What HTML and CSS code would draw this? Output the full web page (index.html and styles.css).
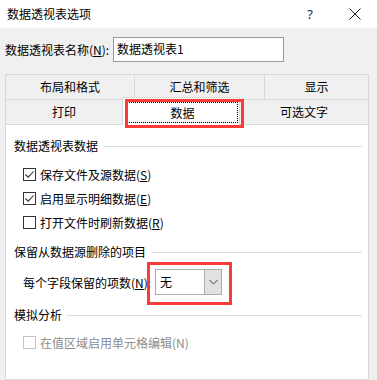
FILE: index.html
```html
<!DOCTYPE html>
<html lang="zh-CN">
<head>
<meta charset="utf-8">
<title>数据透视表选项</title>
<link rel="stylesheet" href="styles.css">
</head>
<body>
<div class="dialog">
  <div class="titlebar">
    <span class="title">数据透视表选项</span>
    <span class="tbtn help">?</span>
    <span class="tbtn close">
      <svg width="12" height="12" viewBox="0 0 12 12"><path d="M0.5 0.5 L11.5 11.5 M11.5 0.5 L0.5 11.5" stroke="#222" stroke-width="1" fill="none"/></svg>
    </span>
  </div>
  <div class="body">
    <div class="namerow">
      <span class="namelabel">数据透视表名称(<u>N</u>):</span>
      <div class="textbox">数据透视表1</div>
    </div>
    <div class="tabs">
      <div class="tabrow row1">
        <div class="tab">布局和格式</div>
        <div class="tab">汇总和筛选</div>
        <div class="tab last">显示</div>
      </div>
      <div class="tabrow row2">
        <div class="tab">打印</div>
        <div class="tab selected"><span class="focus">数据</span><span class="mark tabmark"></span></div>
        <div class="tab last">可选文字</div>
      </div>
    </div>
    <div class="panel">
      <div class="group">
        <div class="ghead">数据透视表数据</div>
        <div class="checks">
          <div class="check"><span class="box"><svg width="11" height="11" viewBox="0 0 11 11"><path d="M1.5 5.5 L4.2 8.2 L9.5 2.5" stroke="#333" stroke-width="1.1" fill="none"/></svg></span><span>保存文件及源数据(<u>S</u>)</span></div>
          <div class="check"><span class="box"><svg width="11" height="11" viewBox="0 0 11 11"><path d="M1.5 5.5 L4.2 8.2 L9.5 2.5" stroke="#333" stroke-width="1.1" fill="none"/></svg></span><span>启用显示明细数据(<u>E</u>)</span></div>
          <div class="check"><span class="box"></span><span>打开文件时刷新数据(<u>R</u>)</span></div>
        </div>
      </div>
      <div class="group g2">
        <div class="ghead">保留从数据源删除的项目</div>
        <div class="selrow">
          <span class="sellabel">每个字段保留的项数(<u>N</u>):</span>
          <div class="select">
            <span class="selval">无</span>
            <span class="selbtn"><svg width="9" height="6" viewBox="0 0 9 6"><path d="M0.5 1 L4.5 5 L8.5 1" stroke="#444" stroke-width="1" fill="none"/></svg></span>
            <span class="mark selmark"></span>
          </div>
        </div>
      </div>
      <div class="group g3">
        <div class="ghead">模拟分析</div>
        <div class="check disabled"><span class="box"></span><span>在值区域启用单元格编辑(N)</span></div>
      </div>
    </div>
  </div>
</div>
</body>
</html>
```

FILE: styles.css
```css
html, body {
  margin: 0;
  padding: 0;
}
body {
  width: 377px;
  height: 380px;
  overflow: hidden;
  font-family: "Noto Sans CJK SC", "Microsoft YaHei", sans-serif;
  font-size: 12px;
  color: #000;
  background: #f0f0f0;
}
.dialog {
  display: flex;
  flex-direction: column;
  height: 380px;
}
.titlebar {
  height: 28px;
  background: #fff;
  display: flex;
  align-items: center;
  padding-left: 7px;
  flex: none;
}
.title {
  flex: 1;
  line-height: 16px;
}
.tbtn {
  display: flex;
  align-items: center;
  justify-content: center;
  height: 28px;
}
.help {
  width: 46px;
  font-family: "Noto Sans", sans-serif;
  font-size: 13px;
  color: #222;
}
.close {
  width: 44px;
}
.body {
  flex: 1;
  display: flex;
  flex-direction: column;
  padding: 9px 0 0 5px;
}
.namerow {
  display: flex;
  align-items: center;
  height: 25px;
}
.namelabel {
  width: 108px;
  white-space: nowrap;
}
.textbox {
  box-sizing: border-box;
  width: 171px;
  height: 25px;
  background: #fff;
  border: 1px solid #9a9a9a;
  padding: 0 3px;
  line-height: 22px;
}
.tabs {
  margin-top: 12px;
  width: 364px;
}
.tabrow {
  display: grid;
  height: 25px;
}
.row1 {
  grid-template-columns: 129px 130px 105px;
}
.row2 {
  grid-template-columns: 117px 118px 129px;
}
.tab {
  box-sizing: border-box;
  border-top: 1px solid #d9d9d9;
  border-left: 1px solid #d9d9d9;
  display: flex;
  align-items: center;
  justify-content: center;
  line-height: 16px;
  position: relative;
}
.tab.last {
  border-right: 1px solid #d9d9d9;
}
.tab.selected {
  background: #fff;
  margin-top: -2px;
  height: 27px;
  border-left: 1px solid #d9d9d9;
  border-right: 1px solid #d9d9d9;
  z-index: 2;
  margin-bottom: -1px;
  height: 28px;
  padding: 4px 1px 2px 4px;
  align-items: stretch;
}
.row2 .tab.last {
  border-left: none;
}
.focus {
  flex: 1;
  border: 1px dotted #000;
  display: flex;
  align-items: center;
  justify-content: center;
}
.mark {
  position: absolute;
  border: 3px solid #fb3a3a;
  box-sizing: border-box;
  pointer-events: none;
}
.tabmark {
  left: 2px;
  top: 1px;
  width: 119px;
  height: 29px;
}
.panel {
  flex: 1;
  box-sizing: border-box;
  width: 364px;
  background: #fff;
  border: 1px solid #d9d9d9;
  padding: 13px 6px 0 8px;
}
.ghead {
  display: flex;
  align-items: center;
  height: 16px;
  line-height: 16px;
  white-space: nowrap;
}
.ghead::after {
  content: "";
  flex: 1;
  border-top: 1px solid #dcdcdc;
  margin-left: 5px;
}
.checks {
  margin-top: 8px;
}
.check {
  display: flex;
  align-items: center;
  height: 24px;
  padding-left: 9px;
  white-space: nowrap;
}
.box {
  box-sizing: border-box;
  width: 13px;
  height: 13px;
  border: 1px solid #333;
  background: #fff;
  margin-right: 4px;
  display: flex;
  align-items: center;
  justify-content: center;
  flex: none;
}
.check.disabled {
  color: #8d8d8d;
}
.check.disabled .box {
  border-color: #c4c4c4;
}
.g2 {
  margin-top: 10px;
}
.selrow {
  display: flex;
  align-items: center;
  margin-top: 9px;
  padding-left: 9px;
}
.sellabel {
  width: 132px;
  white-space: nowrap;
}
.select {
  position: relative;
  box-sizing: border-box;
  width: 67px;
  height: 26px;
  border: 1px solid #adadad;
  background: #fff;
  display: flex;
  align-items: center;
}
.selval {
  flex: 1;
  padding-left: 4px;
  line-height: 16px;
}
.selbtn {
  width: 16px;
  align-self: stretch;
  background: #e1e1e1;
  border-left: 1px solid #adadad;
  display: flex;
  align-items: center;
  justify-content: center;
}
.selmark {
  left: -9px;
  top: -8px;
  width: 85px;
  height: 43px;
}
.g3 {
  margin-top: 12px;
}
.g3 .check {
  margin-top: 7px;
}
```
